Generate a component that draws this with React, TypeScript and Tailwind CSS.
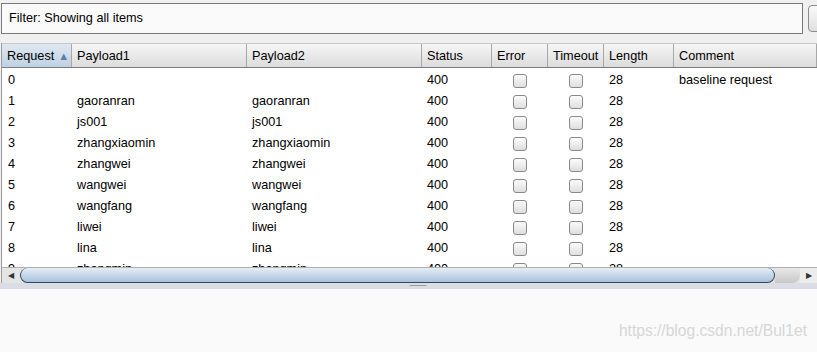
import React from "react";

const cols = "grid grid-cols-[70px_175px_175px_70px_56px_56px_70px_1fr]";

const rows = [
  ["0", "", "", "400", "28", "baseline request"],
  ["1", "gaoranran", "gaoranran", "400", "28", ""],
  ["2", "js001", "js001", "400", "28", ""],
  ["3", "zhangxiaomin", "zhangxiaomin", "400", "28", ""],
  ["4", "zhangwei", "zhangwei", "400", "28", ""],
  ["5", "wangwei", "wangwei", "400", "28", ""],
  ["6", "wangfang", "wangfang", "400", "28", ""],
  ["7", "liwei", "liwei", "400", "28", ""],
  ["8", "lina", "lina", "400", "28", ""],
  ["9", "zhangmin", "zhangmin", "400", "28", ""],
];

function Box() {
  return (
    <div className="flex justify-center items-center">
      <div className="h-[14px] w-[14px] rounded-[3px] border border-[#8a8a8a] bg-gradient-to-b from-[#fbfbfb] to-[#dedede]" />
    </div>
  );
}

function Head({ label, sorted }: { label: string; sorted?: boolean }) {
  return (
    <div
      className={`flex items-center pt-[2px] px-[5px] border-r border-[#a8a8a8] ${
        sorted ? "bg-gradient-to-b from-[#dfe8f1] to-[#bfd1e3]" : "bg-gradient-to-b from-[#f6f6f6] to-[#dcdcdc]"
      }`}
    >
      <span>{label}</span>
      {sorted && <span className="ml-[4px] text-[11px] leading-none text-[#5a7fa6]">▲</span>}
    </div>
  );
}

export default function App() {
  return (
    <div className="w-[817px] h-[352px] overflow-hidden bg-[#f0f0f0] text-[12.7px] text-black font-['Liberation_Sans',Arial,sans-serif] flex flex-col">
      <div className="flex pt-[3px] pl-[1px] gap-[5px] h-[43px]">
        <div className="shrink-0 w-[802px] h-[31px] border border-[#7a7a7a] bg-[#fafafa] flex items-center pl-[7px] pt-[1px]">
          Filter: Showing all items
        </div>
        <div className="shrink-0 w-[20px] h-[27px] mt-[2px] rounded-[4px] border border-[#8c8c8c] bg-gradient-to-b from-[#fafafa] to-[#e0e0e0]" />
      </div>

      <div className="ml-[1px] h-[240px] border-l border-[#9a9a9a] flex flex-col bg-white">
        <div className={`${cols} h-[25px] shrink-0 border-t border-[#c8c8c8] border-b border-b-[#7d7d7d]`}>
          <Head label="Request" sorted />
          <Head label="Payload1" />
          <Head label="Payload2" />
          <Head label="Status" />
          <Head label="Error" />
          <Head label="Timeout" />
          <Head label="Length" />
          <Head label="Comment" />
        </div>
        <div className="flex-1 overflow-hidden pt-[2px]">
          {rows.map((r) => (
            <div key={r[0]} className={`${cols} h-[21px] items-center`}>
              <div className="px-[6px]">{r[0]}</div>
              <div className="px-[5px]">{r[1]}</div>
              <div className="px-[5px]">{r[2]}</div>
              <div className="px-[5px]">{r[3]}</div>
              <Box />
              <Box />
              <div className="px-[5px]">{r[4]}</div>
              <div className="px-[5px]">{r[5]}</div>
            </div>
          ))}
        </div>
        <div className="h-[16px] shrink-0 flex border-t border-[#b0b0b0] bg-[#e4e4e4]">
          <div className="w-[18px] flex items-center justify-center text-[8px] text-[#333]">◀</div>
          <div className="w-[755px] rounded-l-[14px] rounded-r-[14px] border-b border-l border-r border-[#2f4a66] bg-gradient-to-b from-[#e6eef6] via-[#c6d7e9] to-[#a9c1da]" />
          <div className="flex-1 bg-gradient-to-b from-[#e8e8e8] to-[#c8c8c8] rounded-r-[12px]" />
          <div className="w-[17px] flex items-center justify-center text-[8px] text-[#333] bg-[#ececec]">▶</div>
        </div>
      </div>

      <div className="h-[6px] bg-[#dcdde3] flex justify-center">
        <div className="w-[18px] h-[3px] mt-[2px] ml-[18px] rounded-[2px] border-t border-[#9a9aa0]" />
      </div>

      <div className="flex-1 bg-[#fafafa] flex justify-end items-end pr-[10px] pb-[10px]">
        <span className="text-[15.6px] text-[#d6d6d6]">https://blog.csdn.net/Bul1et</span>
      </div>
    </div>
  );
}
